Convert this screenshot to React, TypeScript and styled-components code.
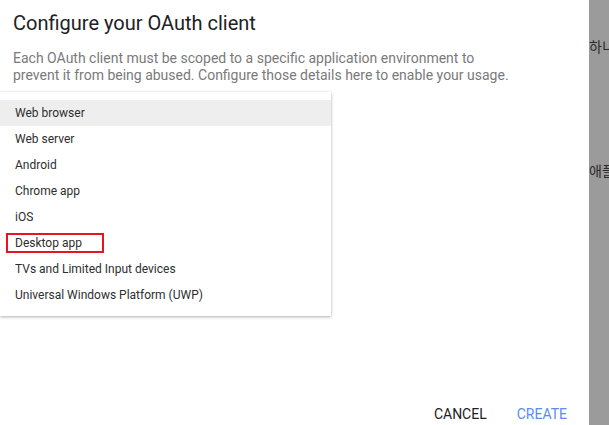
import React, { JSX } from "react";
import styled, { createGlobalStyle } from "styled-components";

const GlobalStyle = createGlobalStyle`
    html, body {
        margin: 0;
        padding: 0;
        height: 100%;
        overflow: hidden;
        background: #ffffff;
    }
    #root {
        height: 100%;
    }
`;

const Page = styled.div`
    display: flex;
    flex-direction: row;
    height: 100vh;
    font-family: Roboto, "Liberation Sans", sans-serif;
`;

const Dialog = styled.div`
    width: 589px;
    flex-shrink: 0;
    display: flex;
    flex-direction: column;
    background: #ffffff;
`;

const Title = styled.h2`
    margin: 11px 0 0 13px;
    font-size: 20px;
    line-height: 24px;
    font-weight: 400;
    color: #202124;
`;

const Description = styled.p`
    margin: 15px 0 0 13px;
    font-size: 14px;
    line-height: 17px;
    color: #7a7a7a;
`;

const Menu = styled.ul`
    list-style: none;
    margin: 8px 0 0 0;
    padding: 8px 0;
    width: 331px;
    background: #ffffff;
    box-shadow: 0 1px 3px rgba(0, 0, 0, 0.3), 0 0 1px rgba(0, 0, 0, 0.08);
`;

const MenuItem = styled.li<{ $active?: boolean }>`
    height: 26px;
    display: flex;
    align-items: center;
    padding-left: 15px;
    font-size: 12px;
    color: #2e2e2e;
    background: ${(p) => (p.$active ? "#eeeeee" : "transparent")};
`;

const Marked = styled.span`
    margin-left: -9px;
    padding: 1px 20px 1px 7px;
    border: 2px solid #e8141f;
`;

const Spacer = styled.div`
    flex: 1;
`;

const Actions = styled.div`
    display: flex;
    justify-content: flex-end;
    gap: 14px;
    padding: 0 14px 1px 0;
`;

const ActionButton = styled.button<{ $primary?: boolean }>`
    border: none;
    background: none;
    padding: 0 8px;
    font-family: Roboto, "Liberation Sans", sans-serif;
    font-size: 14px;
    line-height: 20px;
    text-transform: uppercase;
    color: ${(p) => (p.$primary ? "#5b8cf2" : "#202124")};
`;

const Backdrop = styled.div`
    flex: 1;
    background: #9b9b9b;
    overflow: hidden;
    white-space: nowrap;
    font-family: "Noto Sans CJK KR", sans-serif;
    font-size: 14px;
    color: #2a2a2a;
`;

const BehindLine = styled.div<{ $top: number }>`
    margin-top: ${(p) => p.$top}px;
    line-height: 20px;
`;

const platforms = [
    "Web browser",
    "Web server",
    "Android",
    "Chrome app",
    "iOS",
    "Desktop app",
    "TVs and Limited Input devices",
    "Universal Windows Platform (UWP)",
];

export default function App(): JSX.Element {
    return (
        <>
            <GlobalStyle />
            <Page>
                <Dialog>
                    <Title>Configure your OAuth client</Title>
                    <Description>
                        Each OAuth client must be scoped to a specific application
                        environment to
                        <br />
                        prevent it from being abused. Configure those details here to
                        enable your usage.
                    </Description>
                    <Menu>
                        {platforms.map((name, i) => (
                            <MenuItem key={name} $active={i === 0}>
                                {name === "Desktop app" ? <Marked>{name}</Marked> : name}
                            </MenuItem>
                        ))}
                    </Menu>
                    <Spacer />
                    <Actions>
                        <ActionButton>Cancel</ActionButton>
                        <ActionButton $primary>Create</ActionButton>
                    </Actions>
                </Dialog>
                <Backdrop>
                    <BehindLine $top={36}>하니</BehindLine>
                    <BehindLine $top={104}>애플</BehindLine>
                </Backdrop>
            </Page>
        </>
    );
}
